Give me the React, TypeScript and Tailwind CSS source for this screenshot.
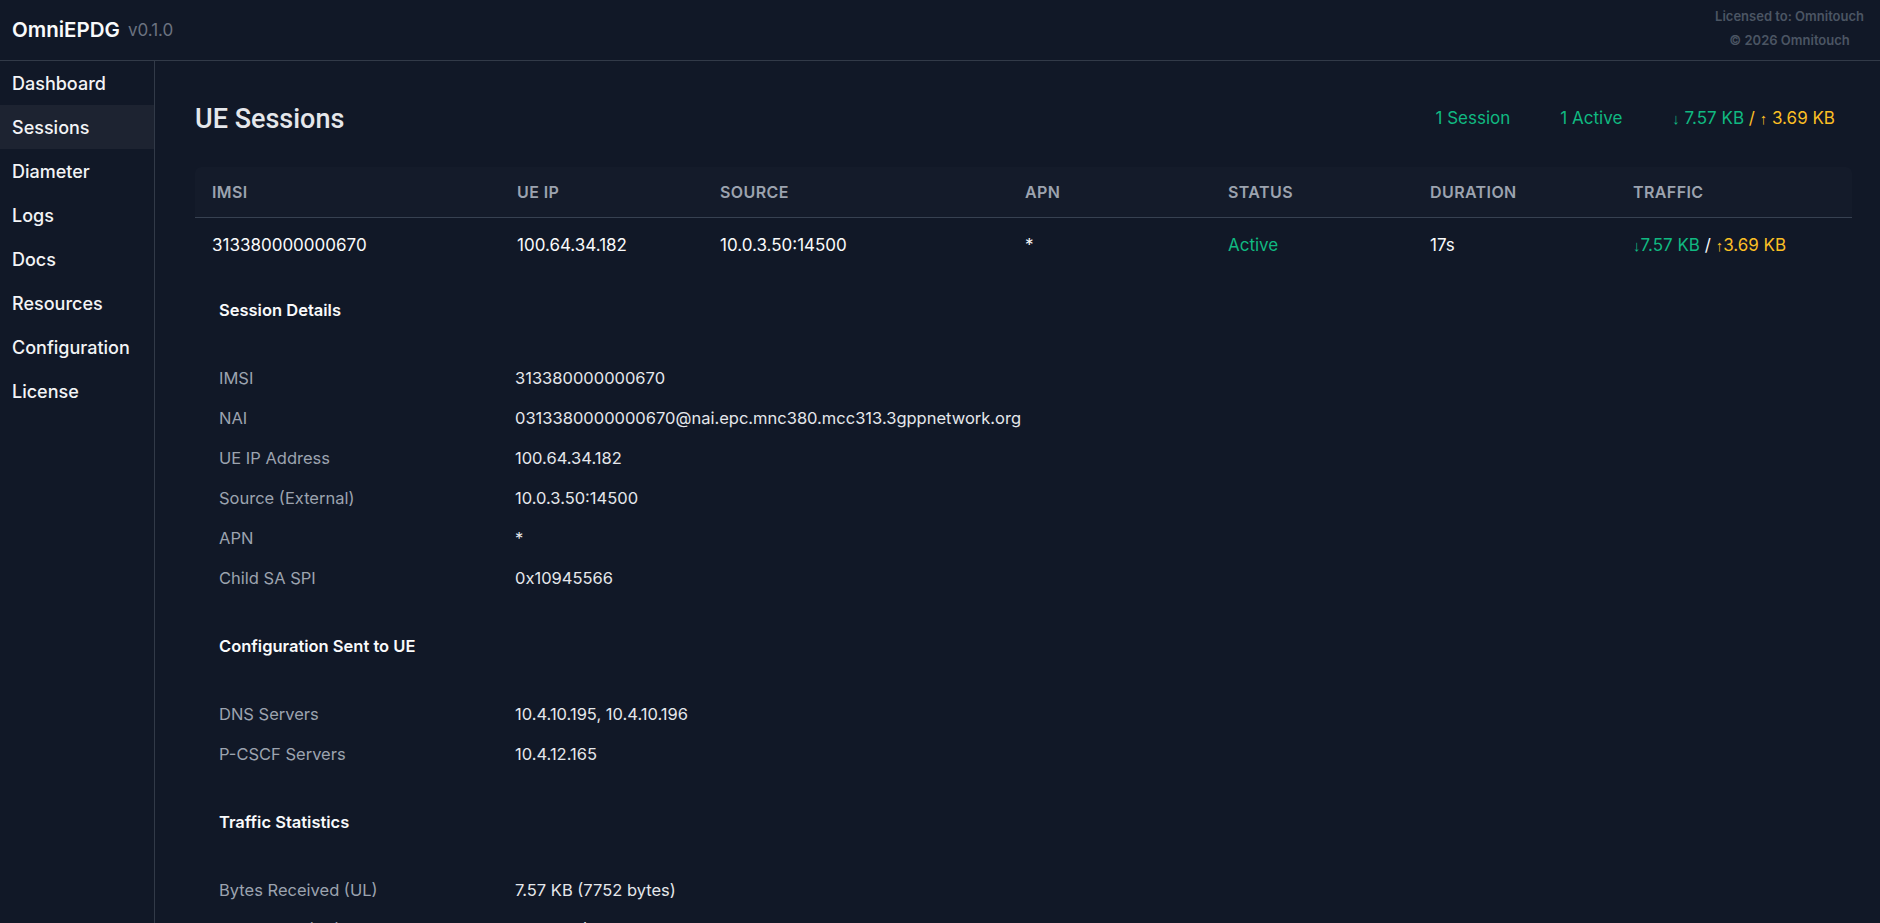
import React from 'react';

const navItems = ['Dashboard', 'Sessions', 'Diameter', 'Logs', 'Docs', 'Resources', 'Configuration', 'License'];

const columns = ['IMSI', 'UE IP', 'Source', 'APN', 'Status', 'Duration', 'Traffic'];

const sections = [
  {
    title: 'Session Details',
    rows: [
      ['IMSI', '313380000000670'],
      ['NAI', '0313380000000670@nai.epc.mnc380.mcc313.3gppnetwork.org'],
      ['UE IP Address', '100.64.34.182'],
      ['Source (External)', '10.0.3.50:14500'],
      ['APN', '*'],
      ['Child SA SPI', '0x10945566'],
    ],
  },
  {
    title: 'Configuration Sent to UE',
    rows: [
      ['DNS Servers', '10.4.10.195, 10.4.10.196'],
      ['P-CSCF Servers', '10.4.12.165'],
    ],
  },
  {
    title: 'Traffic Statistics',
    rows: [
      ['Bytes Received (UL)', '7.57 KB (7752 bytes)'],
      ['Bytes Sent (DL)', '3.69 KB (3778 bytes)'],
    ],
  },
];

const gridCols = 'grid grid-cols-[305px_203px_305px_203px_202px_203px_1fr]';

// thin arrow glyphs like the original (narrow font)
const Arrow = ({ dir }: { dir: 'up' | 'down' }) => (
  <span className="font-['Liberation_Sans'] text-[15px]">{dir === 'up' ? '↑' : '↓'}</span>
);

export default function App() {
  return (
    <div
      className="h-screen flex flex-col overflow-hidden bg-[#111827] text-[#f3f4f6]"
      style={{ fontFamily: 'Inter, "Noto Sans", sans-serif' }}
    >
      <header className="h-[61px] shrink-0 flex items-start justify-between border-b border-[#323a48] pl-3 pr-4">
        <div className="h-[60px] flex items-center gap-2">
          <span className="text-[20.5px] font-semibold text-[#f9fafb]">OmniEPDG</span>
          <span className="text-[17px] text-[#6b7280] mt-[2px]">v0.1.0</span>
        </div>
        <div className="flex flex-col items-center pt-1 text-[13px] leading-6 font-semibold text-[#4b5563]">
          <span>Licensed to: Omnitouch</span>
          <span>© 2026 Omnitouch</span>
        </div>
      </header>

      <div className="flex flex-1 min-h-0">
        <nav className="w-[155px] shrink-0 border-r border-[#323a48]">
          {navItems.map((item) => (
            <div
              key={item}
              className={`h-11 flex items-center px-3 text-[18px] font-medium ${
                item === 'Sessions' ? 'bg-[#1d2331]' : ''
              }`}
            >
              {item}
            </div>
          ))}
        </nav>

        <main className="flex-1 min-w-0 overflow-hidden pt-10 pl-10 pr-[28px]">
          <div className="h-9 mb-[30px] flex items-center justify-between">
            <h1 className="font-['Roboto'] text-[27px] font-medium text-[#e5e7eb]">UE Sessions</h1>
            <div className="flex items-center gap-[50px] pr-[17px] text-[17px] text-[#10b981]">
              <span>1 Session</span>
              <span>1 Active</span>
              <span>
                <Arrow dir="down" /> 7.57 KB{' '}
                <span className="text-[#fbbf24]">
                  / <Arrow dir="up" /> 3.69 KB
                </span>
              </span>
            </div>
          </div>

          <div>
            <div className={`${gridCols} h-[51px] items-center bg-[#141b2a] rounded-t-md border-b border-[#374151]`}>
              {columns.map((col) => (
                <div key={col} className="pl-[17px] text-[16px] font-semibold uppercase tracking-wide text-[#9ca3af]">
                  {col}
                </div>
              ))}
            </div>

            <div className={`${gridCols} h-14 items-center text-[17px] text-[#f9fafb]`}>
              <div className="pl-[17px]">313380000000670</div>
              <div className="pl-[17px]">100.64.34.182</div>
              <div className="pl-[17px]">10.0.3.50:14500</div>
              <div className="pl-[17px]">*</div>
              <div className="pl-[17px] text-[#10b981]">Active</div>
              <div className="pl-[17px]">17s</div>
              <div className="pl-[17px]">
                <span className="text-[#10b981]">
                  <Arrow dir="down" />7.57 KB
                </span>{' '}
                /{' '}
                <span className="text-[#fbbf24]">
                  <Arrow dir="up" />3.69 KB
                </span>
              </div>
            </div>

            <div className="p-6 space-y-9">
              {sections.map((section) => (
                <div key={section.title}>
                  <h4 className="h-6 mb-9 flex items-center text-[16.5px] font-semibold text-[#f9fafb]">
                    {section.title}
                  </h4>
                  {section.rows.map(([label, value]) => (
                    <div key={label} className="h-10 flex items-center text-[16.5px]">
                      <div className="w-[296px] shrink-0 text-[#9ca3af]">{label}</div>
                      <div className="text-[#e5e7eb]">{value}</div>
                    </div>
                  ))}
                </div>
              ))}
            </div>
          </div>
        </main>
      </div>
    </div>
  );
}
